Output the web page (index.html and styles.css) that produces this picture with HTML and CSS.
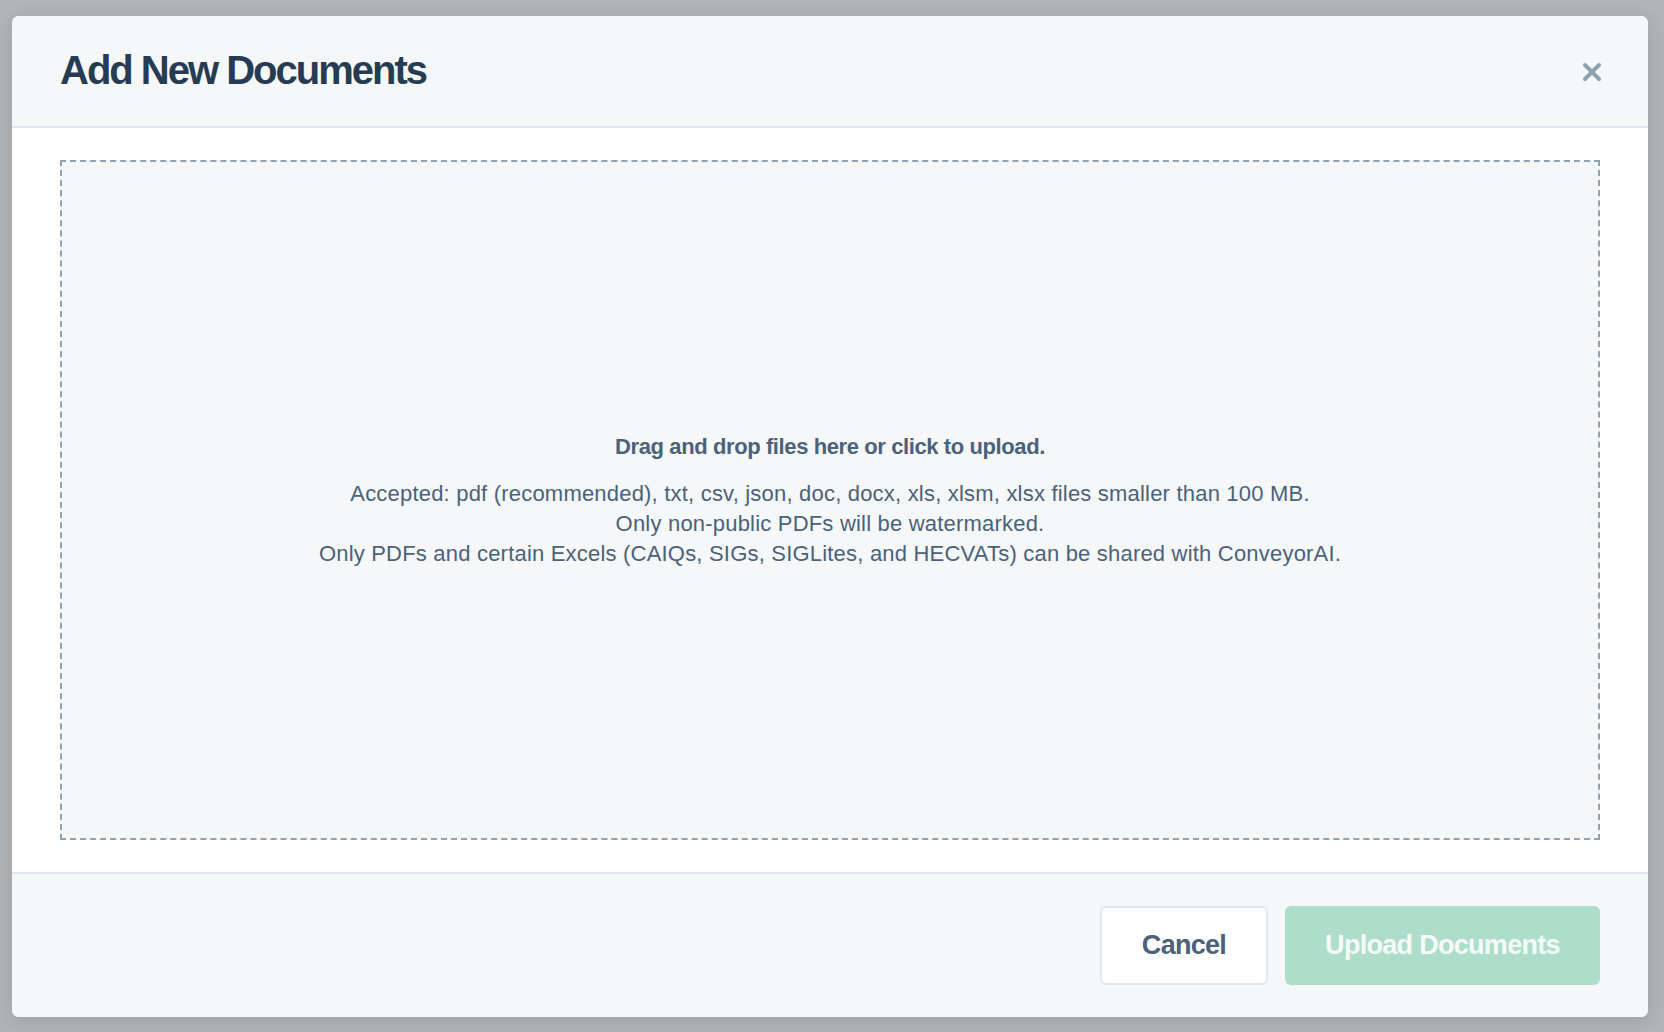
FILE: index.html
```html
<!DOCTYPE html>
<html lang="en">
<head>
<meta charset="utf-8">
<title>Add New Documents</title>
<link rel="stylesheet" href="styles.css">
</head>
<body>
<div class="backdrop">
  <div class="modal">
    <div class="modal-header">
      <h1 class="modal-title">Add New Documents</h1>
      <button class="close-btn" aria-label="Close">
        <svg width="20" height="20" viewBox="0 0 20 20"><path d="M3 3 L17 17 M17 3 L3 17" stroke="#8ea3b4" stroke-width="4" stroke-linecap="round" fill="none"/></svg>
      </button>
    </div>
    <div class="modal-body">
      <div class="dropzone">
        <p class="drop-title">Drag and drop files here or click to upload.</p>
        <p class="drop-info">Accepted: pdf (recommended), txt, csv, json, doc, docx, xls, xlsm, xlsx files smaller than 100 MB.<br>Only non-public PDFs will be watermarked.<br>Only PDFs and certain Excels (CAIQs, SIGs, SIGLites, and HECVATs) can be shared with ConveyorAI.</p>
      </div>
    </div>
    <div class="modal-footer">
      <button class="btn btn-cancel">Cancel</button>
      <button class="btn btn-upload" disabled>Upload Documents</button>
    </div>
  </div>
</div>
</body>
</html>
```

FILE: styles.css
```css
html, body {
  margin: 0;
  padding: 0;
  height: 100%;
}
body {
  background: #b3b4b6;
  font-family: "Liberation Sans", Arial, sans-serif;
  overflow: hidden;
}
.backdrop {
  padding: 16px 16px 0 12px;
}
.modal {
  height: 1001px;
  background: #ffffff;
  border-radius: 7px;
  overflow: hidden;
  display: flex;
  flex-direction: column;
  box-shadow: 0 4px 20px rgba(0,0,0,0.12);
}
.modal-header {
  height: 110px;
  flex: none;
  background: #f5f7f9;
  border-bottom: 2px solid #e1e7ed;
  display: flex;
  align-items: center;
  justify-content: space-between;
  padding: 0 46px 0 48px;
}
.modal-title {
  margin: 0;
  font-size: 40px;
  font-weight: 700;
  letter-spacing: -2px;
  color: #253c52;
  padding-bottom: 2px;
}
.close-btn {
  background: none;
  border: 0;
  padding: 0;
  width: 20px;
  height: 20px;
  margin-top: 2px;
  cursor: pointer;
}
.close-btn svg { display: block; }
.modal-body {
  flex: none;
  padding: 32px 48px;
}
.dropzone {
  height: 676px;
  background: #f5f7f9;
  border: 2px dashed #8ea3b4;
  display: flex;
  flex-direction: column;
  align-items: center;
  justify-content: center;
  text-align: center;
  color: #4b6279;
}
.drop-title {
  margin: 0 0 17px;
  font-size: 22px;
  font-weight: 700;
  letter-spacing: -0.4px;
  line-height: 30px;
}
.drop-info {
  margin: 0;
  font-size: 22px;
  line-height: 30px;
  letter-spacing: 0.2px;
}
.modal-footer {
  flex: 1;
  background: #f5f7f9;
  border-top: 2px solid #e1e7ed;
  display: flex;
  align-items: center;
  justify-content: flex-end;
  gap: 17px;
  padding: 0 48px;
}
.btn {
  height: 79px;
  border-radius: 6px;
  font-family: "Liberation Sans", Arial, sans-serif;
  font-size: 27px;
  font-weight: 700;
  letter-spacing: -0.7px;
}
.btn-cancel {
  width: 168px;
  background: #ffffff;
  border: 2px solid #e1e7ed;
  color: #4b6279;
}
.btn-upload {
  width: 315px;
  background: #aeddcc;
  border: 0;
  color: #f4fbf8;
}
```
